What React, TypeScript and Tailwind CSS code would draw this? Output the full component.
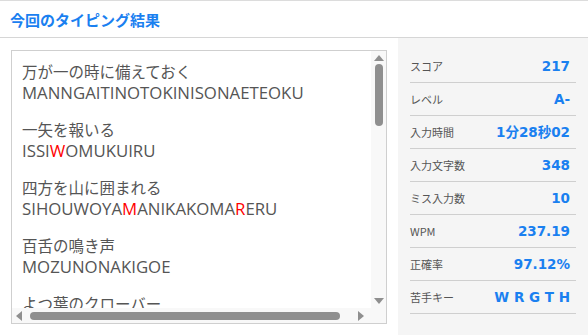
import React from 'react';

const jp = { fontFamily: '"Noto Sans CJK JP", "Noto Sans", sans-serif' };
const num = { fontFamily: '"DejaVu Sans", "Noto Sans CJK JP", sans-serif' };
const roma = { fontFamily: '"Open Sans", "Noto Sans CJK JP", sans-serif' };

type Seg = { t: string; miss?: boolean };

const entries: { jp: string; roma: Seg[] }[] = [
  { jp: '万が一の時に備えておく', roma: [{ t: 'MANNGAITINOTOKINISONAETEOKU' }] },
  { jp: '一矢を報いる', roma: [{ t: 'ISSI' }, { t: 'W', miss: true }, { t: 'OMUKUIRU' }] },
  {
    jp: '四方を山に囲まれる',
    roma: [{ t: 'SIHOUWOYA' }, { t: 'M', miss: true }, { t: 'ANIKAKOMA' }, { t: 'R', miss: true }, { t: 'ERU' }],
  },
  { jp: '百舌の鳴き声', roma: [{ t: 'MOZUNONAKIGOE' }] },
  { jp: 'よつ葉のクローバー', roma: [{ t: 'YOTUBANOKUROBA-' }] },
];

const stats = [
  { label: 'スコア', value: '217' },
  { label: 'レベル', value: 'A-' },
  { label: '入力時間', value: '1分28秒02' },
  { label: '入力文字数', value: '348' },
  { label: 'ミス入力数', value: '10' },
  { label: 'WPM', value: '237.19' },
  { label: '正確率', value: '97.12%' },
  { label: '苦手キー', value: 'W R G T H' },
];

const Arrow = ({ dir }: { dir: 'up' | 'down' | 'left' | 'right' }) => {
  const pts = {
    up: '0,6 5,0 10,6',
    down: '0,0 10,0 5,6',
    left: '6,0 6,10 0,5',
    right: '0,0 0,10 6,5',
  }[dir];
  const vert = dir === 'up' || dir === 'down';
  return (
    <svg width={vert ? 10 : 6} height={vert ? 6 : 10} viewBox={vert ? '0 0 10 6' : '0 0 6 10'}>
      <polygon points={pts} fill="#8f8f8f" />
    </svg>
  );
};

const App = () => {
  return (
    <div className="w-[588px] h-[335px] bg-white overflow-hidden border-t border-[#dcdcdc] flex flex-col" style={jp}>
      <div className="h-[37px] flex-none border-b border-[#d6d6d6] flex items-center px-[10px]">
        <span className="text-[15px] font-bold text-[#1a80f0] leading-none">今回のタイピング結果</span>
      </div>
      <div className="flex-1 flex">
        <div className="w-[398px] flex-none pt-[12px] pl-[11px] pr-[11px]">
          <div className="h-[274px] border border-[#cfcfcf] flex flex-col">
            <div className="flex flex-1 min-h-0">
              <div className="flex-1 overflow-hidden pl-[10px] pt-[9px] text-[#555] text-[15.5px] leading-[22px]">
                {entries.map((e, i) => (
                  <div key={i} className="mb-[14px] whitespace-nowrap">
                    <div>{e.jp}</div>
                    <div className="text-[16.8px]" style={roma}>
                      {e.roma.map((s, j) => (
                        <span key={j} className={s.miss ? 'text-[#ff0000]' : ''}>
                          {s.t}
                        </span>
                      ))}
                    </div>
                  </div>
                ))}
              </div>
              <div className="w-[15px] flex-none bg-[#f8f8f8] flex flex-col items-center pt-[4px] pb-[4px]">
                <Arrow dir="up" />
                <div className="w-[8px] h-[62px] mt-[3px] rounded-full bg-[#8f8f8f]" />
                <div className="flex-1" />
                <Arrow dir="down" />
              </div>
            </div>
            <div className="h-[15px] flex-none bg-[#f8f8f8] flex items-center pl-[4px] pr-[4px]">
              <Arrow dir="left" />
              <div className="h-[8px] w-[310px] ml-[8px] rounded-full bg-[#8f8f8f]" />
              <div className="flex-1" />
              <Arrow dir="right" />
              <div className="w-[18px]" />
            </div>
          </div>
        </div>
        <div className="flex-1 bg-[#f5f5f5] pt-[12px] pl-[12px] pr-[12px]">
          {stats.map((s) => (
            <div key={s.label} className="h-[33px] border-b border-[#cfcfcf] flex items-center justify-between pr-[6px]">
              <span className="text-[11px] text-[#555]">{s.label}</span>
              <span className="text-[13.5px] font-bold text-[#1a80f0] whitespace-pre" style={num}>
                {s.value}
              </span>
            </div>
          ))}
        </div>
      </div>
    </div>
  );
};

export default App;
